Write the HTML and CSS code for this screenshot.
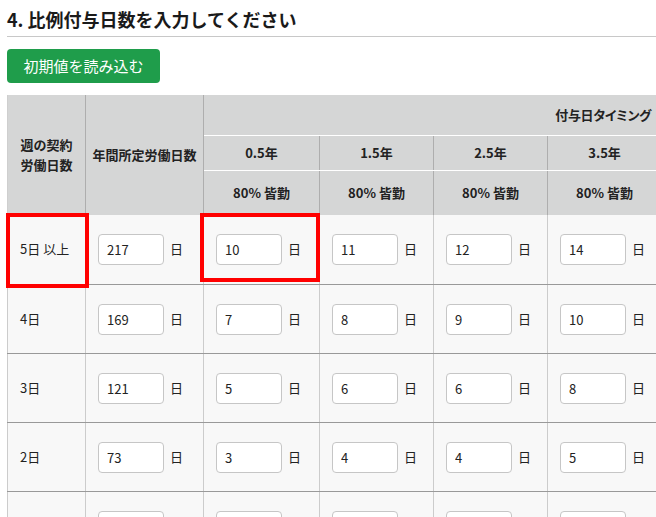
FILE: index.html
```html
<!DOCTYPE html>
<html lang="ja">
<head>
<meta charset="utf-8">
<title>比例付与日数</title>
<link rel="stylesheet" href="styles.css">
</head>
<body>
<div class="page">
  <h2 class="title">4. 比例付与日数を入力してください</h2>
  <button class="load-btn" type="button">初期値を読み込む</button>
  <div class="table-wrap">
    <table class="grant">
      <colgroup>
        <col class="w-week"><col class="w-year"><col class="w-first">
        <col class="w-col"><col class="w-col"><col class="w-col">
      </colgroup>
      <thead>
        <tr class="hr1">
          <th rowspan="3">週の契約<br>労働日数</th>
          <th rowspan="3">年間所定労働日数</th>
          <th colspan="4" class="timing">付与日タイミング</th>
        </tr>
        <tr class="hr2">
          <th>0.5年</th><th>1.5年</th><th>2.5年</th><th>3.5年</th>
        </tr>
        <tr class="hr3">
          <th>80% 皆勤</th><th>80% 皆勤</th><th>80% 皆勤</th><th>80% 皆勤</th>
        </tr>
      </thead>
      <tbody>
        <tr>
          <td class="label">5日 以上</td>
          <td><input type="text" value="217"><span class="unit">日</span></td>
          <td><input type="text" value="10"><span class="unit">日</span></td>
          <td><input type="text" value="11"><span class="unit">日</span></td>
          <td><input type="text" value="12"><span class="unit">日</span></td>
          <td><input type="text" value="14"><span class="unit">日</span></td>
        </tr>
        <tr>
          <td class="label">4日</td>
          <td><input type="text" value="169"><span class="unit">日</span></td>
          <td><input type="text" value="7"><span class="unit">日</span></td>
          <td><input type="text" value="8"><span class="unit">日</span></td>
          <td><input type="text" value="9"><span class="unit">日</span></td>
          <td><input type="text" value="10"><span class="unit">日</span></td>
        </tr>
        <tr>
          <td class="label">3日</td>
          <td><input type="text" value="121"><span class="unit">日</span></td>
          <td><input type="text" value="5"><span class="unit">日</span></td>
          <td><input type="text" value="6"><span class="unit">日</span></td>
          <td><input type="text" value="6"><span class="unit">日</span></td>
          <td><input type="text" value="8"><span class="unit">日</span></td>
        </tr>
        <tr>
          <td class="label">2日</td>
          <td><input type="text" value="73"><span class="unit">日</span></td>
          <td><input type="text" value="3"><span class="unit">日</span></td>
          <td><input type="text" value="4"><span class="unit">日</span></td>
          <td><input type="text" value="4"><span class="unit">日</span></td>
          <td><input type="text" value="5"><span class="unit">日</span></td>
        </tr>
        <tr>
          <td class="label">1日</td>
          <td><input type="text" value="48"><span class="unit">日</span></td>
          <td><input type="text" value="1"><span class="unit">日</span></td>
          <td><input type="text" value="2"><span class="unit">日</span></td>
          <td><input type="text" value="2"><span class="unit">日</span></td>
          <td><input type="text" value="2"><span class="unit">日</span></td>
        </tr>
      </tbody>
    </table>
  </div>
  <div class="mark mark-week"></div>
  <div class="mark mark-first"></div>
</div>
</body>
</html>
```

FILE: styles.css
```css
html, body {
  margin: 0;
  padding: 0;
  overflow: hidden;
  background: #ffffff;
}

body {
  font-family: "Noto Sans CJK JP", "Noto Sans", "Liberation Sans", sans-serif;
  color: #222222;
  font-size: 13px;
  line-height: 1.4;
}

.page {
  position: relative;
  padding: 6px 0 0 7px;
  width: 700px;
}

.title {
  margin: 0;
  font-size: 18px;
  font-weight: bold;
  line-height: 26px;
  color: #1a1a1a;
  padding-bottom: 4px;
  border-bottom: 1px solid #c8c8c8;
}

.load-btn {
  display: block;
  margin-top: 12px;
  width: 153px;
  height: 34px;
  padding: 0;
  border: none;
  border-radius: 4px;
  background: #1f9d4b;
  color: #ffffff;
  font-family: inherit;
  font-size: 15px;
  line-height: 34px;
}

.table-wrap {
  margin-top: 12px;
}

.grant {
  border-collapse: collapse;
  table-layout: fixed;
  width: 654px;
}

.w-week { width: 78px; }
.w-year { width: 118px; }
.w-first { width: 116px; }
.w-col { width: 114px; }

.grant th {
  background: #d5d6d6;
  font-weight: bold;
  color: #222222;
  text-align: center;
  vertical-align: middle;
  padding: 0;
  border-left: 1px solid #aeaeae;
  border-right: 1px solid #aeaeae;
  line-height: 20px;
}

.grant thead tr:first-child th:first-child {
  border-left: 1px solid #cfcfcf;
}

.hr1 { height: 40px; }
.hr2 { height: 35px; }
.hr3 { height: 45px; }

.hr1 .timing {
  border-bottom: 1px solid #ffffff;
  text-align: right;
  padding-right: 10px;
  font-feature-settings: "palt";
  letter-spacing: -0.3px;
}

.hr2 th {
  border-bottom: 1px solid #ffffff;
}

.grant td {
  background: #f8f8f8;
  border-left: 1px solid #cccccc;
  border-right: 1px solid #cccccc;
  border-bottom: 1px solid #999999;
  padding: 0 0 0 12px;
  height: 68px;
  vertical-align: middle;
  white-space: nowrap;
  color: #222222;
}

.grant tbody tr:first-child td {
  height: 69px;
}

.grant input {
  box-sizing: border-box;
  width: 66px;
  height: 31px;
  border: 1px solid #c6c6c6;
  border-radius: 4px;
  background: #ffffff;
  padding: 0 0 0 8px;
  font-family: inherit;
  font-size: 13px;
  color: #222222;
  vertical-align: middle;
}

.unit {
  display: inline-block;
  margin-left: 6px;
  vertical-align: middle;
}

.mark {
  position: absolute;
  box-sizing: border-box;
  border: 4px solid #ff0000;
}

.mark-week {
  left: 6px;
  top: 213px;
  width: 83px;
  height: 75px;
}

.mark-first {
  left: 200px;
  top: 213px;
  width: 120px;
  height: 69px;
}
```
